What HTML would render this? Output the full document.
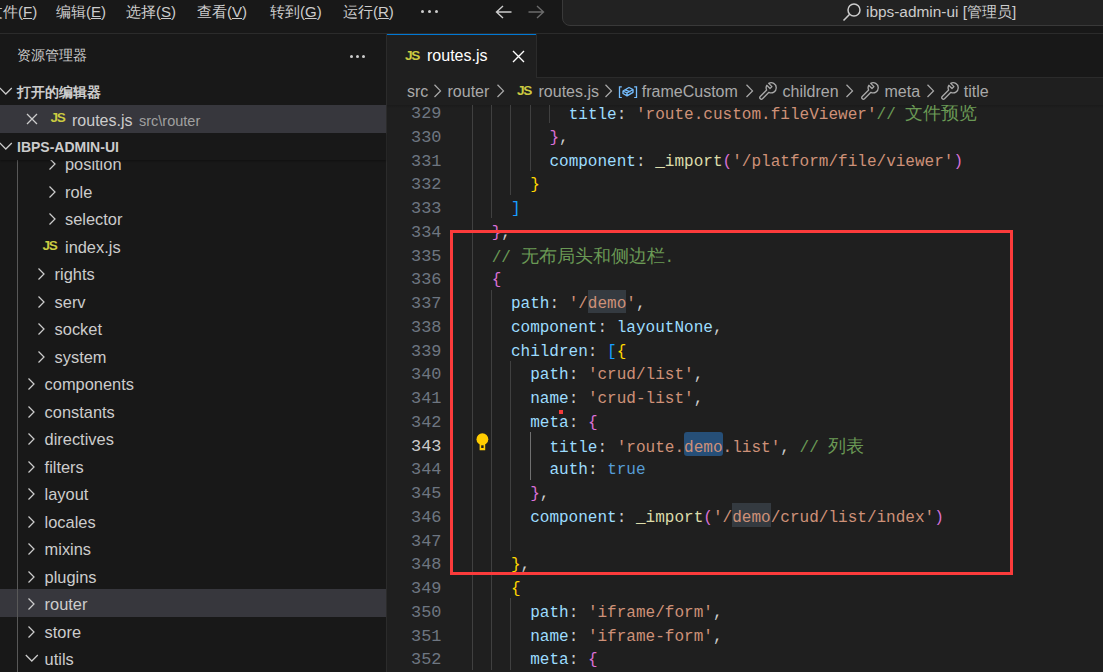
<!DOCTYPE html><html><head><meta charset="utf-8"><style>
*{margin:0;padding:0;box-sizing:border-box}
html,body{width:1103px;height:672px;overflow:hidden;background:#1f1f1f}
body{position:relative;font-family:"Liberation Sans",sans-serif;color:#cccccc}
.a{position:absolute;white-space:nowrap}
.code{font-family:"Liberation Mono",monospace;font-size:16.04px}
.p{color:#9cdcfe}.s{color:#ce9178}.c{color:#6a9955}.f{color:#dcdcaa}.k{color:#569cd6}
.b1{color:#ffd700}.b2{color:#da70d6}.b3{color:#179fff}.w{color:#cccccc}
</style></head><body>
<div class="a" style="left:0;top:0;width:1103px;height:33px;background:#181818"></div>
<div class="a" style="left:0;top:33px;width:1103px;height:1px;background:#2b2b2b"></div>
<div class="a menu" style="left:-12px;top:2px;font-size:15px;line-height:20px;color:#cccccc">文件(<u>F</u>)</div>
<div class="a menu" style="left:56px;top:2px;font-size:15px;line-height:20px;color:#cccccc">编辑(<u>E</u>)</div>
<div class="a menu" style="left:126px;top:2px;font-size:15px;line-height:20px;color:#cccccc">选择(<u>S</u>)</div>
<div class="a menu" style="left:197px;top:2px;font-size:15px;line-height:20px;color:#cccccc">查看(<u>V</u>)</div>
<div class="a menu" style="left:270px;top:2px;font-size:15px;line-height:20px;color:#cccccc">转到(<u>G</u>)</div>
<div class="a menu" style="left:343px;top:2px;font-size:15px;line-height:20px;color:#cccccc">运行(<u>R</u>)</div>
<div class="a" style="left:421px;top:10px;width:3px;height:3px;border-radius:50%;background:#cccccc"></div>
<div class="a" style="left:428px;top:10px;width:3px;height:3px;border-radius:50%;background:#cccccc"></div>
<div class="a" style="left:435px;top:10px;width:3px;height:3px;border-radius:50%;background:#cccccc"></div>
<svg class="a" style="left:494px;top:4px" width="20" height="16" viewBox="0 0 20 16"><path d="M9 2 L2.5 8 L9 14 M2.5 8 H17.5" stroke="#cccccc" stroke-width="1.4" fill="none"/></svg>
<svg class="a" style="left:526px;top:4px" width="20" height="16" viewBox="0 0 20 16"><path d="M11 2 L17.5 8 L11 14 M17.5 8 H2.5" stroke="#6b6b6b" stroke-width="1.4" fill="none"/></svg>
<div class="a" style="left:562px;top:-10px;width:600px;height:36px;background:#222222;border:1px solid #393939;border-radius:8px"></div>
<svg class="a" style="left:842px;top:2px" width="20" height="20" viewBox="0 0 20 20"><circle cx="12" cy="8" r="6" stroke="#cccccc" stroke-width="1.5" fill="none"/><path d="M7.7 12.3 L1.5 18.5" stroke="#cccccc" stroke-width="1.6"/></svg>
<div class="a" style="left:866px;top:1px;font-size:15.4px;line-height:22px;color:#cccccc">ibps-admin-ui [管理员]</div>
<div class="a" style="left:0;top:34px;width:386px;height:638px;background:#181818"></div>
<div class="a" style="left:386px;top:34px;width:1px;height:638px;background:#2b2b2b"></div>
<div class="a" style="left:17px;top:46px;font-size:13.75px;line-height:20px;color:#cccccc">资源管理器</div>
<div class="a" style="left:350px;top:55px;width:3px;height:3px;border-radius:50%;background:#cccccc"></div>
<div class="a" style="left:356px;top:55px;width:3px;height:3px;border-radius:50%;background:#cccccc"></div>
<div class="a" style="left:362px;top:55px;width:3px;height:3px;border-radius:50%;background:#cccccc"></div>
<div class="a" style="left:0;top:589px;width:386px;height:27.5px;background:#37373d"></div>
<div class="a" style="left:17px;top:160px;width:1px;height:512px;background:#585858"></div>
<div class="a" style="left:65px;top:154.2px;font-size:16.4px;line-height:20px;color:#cccccc">position</div>
<svg class="a" style="left:47.5px;top:157.0px" width="9" height="14" viewBox="0 0 9 14"><path d="M1.5 1.5 L7 7 L1.5 12.5" stroke="#cccccc" stroke-width="1.25" fill="none"/></svg>
<div class="a" style="left:65px;top:181.7px;font-size:16.4px;line-height:20px;color:#cccccc">role</div>
<svg class="a" style="left:47.5px;top:184.5px" width="9" height="14" viewBox="0 0 9 14"><path d="M1.5 1.5 L7 7 L1.5 12.5" stroke="#cccccc" stroke-width="1.25" fill="none"/></svg>
<div class="a" style="left:65px;top:209.2px;font-size:16.4px;line-height:20px;color:#cccccc">selector</div>
<svg class="a" style="left:47.5px;top:212.0px" width="9" height="14" viewBox="0 0 9 14"><path d="M1.5 1.5 L7 7 L1.5 12.5" stroke="#cccccc" stroke-width="1.25" fill="none"/></svg>
<div class="a" style="left:65px;top:236.7px;font-size:16.4px;line-height:20px;color:#cccccc">index.js</div>
<div class="a" style="left:42.5px;top:239.8px;font-size:13.6px;line-height:12px;font-weight:bold;color:#cbcb41;letter-spacing:-1.4px">JS</div>
<div class="a" style="left:54.6px;top:264.2px;font-size:16.4px;line-height:20px;color:#cccccc">rights</div>
<svg class="a" style="left:37.1px;top:267.0px" width="9" height="14" viewBox="0 0 9 14"><path d="M1.5 1.5 L7 7 L1.5 12.5" stroke="#cccccc" stroke-width="1.25" fill="none"/></svg>
<div class="a" style="left:54.6px;top:291.7px;font-size:16.4px;line-height:20px;color:#cccccc">serv</div>
<svg class="a" style="left:37.1px;top:294.5px" width="9" height="14" viewBox="0 0 9 14"><path d="M1.5 1.5 L7 7 L1.5 12.5" stroke="#cccccc" stroke-width="1.25" fill="none"/></svg>
<div class="a" style="left:54.6px;top:319.2px;font-size:16.4px;line-height:20px;color:#cccccc">socket</div>
<svg class="a" style="left:37.1px;top:322.0px" width="9" height="14" viewBox="0 0 9 14"><path d="M1.5 1.5 L7 7 L1.5 12.5" stroke="#cccccc" stroke-width="1.25" fill="none"/></svg>
<div class="a" style="left:54.6px;top:346.7px;font-size:16.4px;line-height:20px;color:#cccccc">system</div>
<svg class="a" style="left:37.1px;top:349.5px" width="9" height="14" viewBox="0 0 9 14"><path d="M1.5 1.5 L7 7 L1.5 12.5" stroke="#cccccc" stroke-width="1.25" fill="none"/></svg>
<div class="a" style="left:44.6px;top:374.2px;font-size:16.4px;line-height:20px;color:#cccccc">components</div>
<svg class="a" style="left:27.1px;top:377.0px" width="9" height="14" viewBox="0 0 9 14"><path d="M1.5 1.5 L7 7 L1.5 12.5" stroke="#cccccc" stroke-width="1.25" fill="none"/></svg>
<div class="a" style="left:44.6px;top:401.7px;font-size:16.4px;line-height:20px;color:#cccccc">constants</div>
<svg class="a" style="left:27.1px;top:404.5px" width="9" height="14" viewBox="0 0 9 14"><path d="M1.5 1.5 L7 7 L1.5 12.5" stroke="#cccccc" stroke-width="1.25" fill="none"/></svg>
<div class="a" style="left:44.6px;top:429.2px;font-size:16.4px;line-height:20px;color:#cccccc">directives</div>
<svg class="a" style="left:27.1px;top:432.0px" width="9" height="14" viewBox="0 0 9 14"><path d="M1.5 1.5 L7 7 L1.5 12.5" stroke="#cccccc" stroke-width="1.25" fill="none"/></svg>
<div class="a" style="left:44.6px;top:456.7px;font-size:16.4px;line-height:20px;color:#cccccc">filters</div>
<svg class="a" style="left:27.1px;top:459.5px" width="9" height="14" viewBox="0 0 9 14"><path d="M1.5 1.5 L7 7 L1.5 12.5" stroke="#cccccc" stroke-width="1.25" fill="none"/></svg>
<div class="a" style="left:44.6px;top:484.2px;font-size:16.4px;line-height:20px;color:#cccccc">layout</div>
<svg class="a" style="left:27.1px;top:487.0px" width="9" height="14" viewBox="0 0 9 14"><path d="M1.5 1.5 L7 7 L1.5 12.5" stroke="#cccccc" stroke-width="1.25" fill="none"/></svg>
<div class="a" style="left:44.6px;top:511.7px;font-size:16.4px;line-height:20px;color:#cccccc">locales</div>
<svg class="a" style="left:27.1px;top:514.5px" width="9" height="14" viewBox="0 0 9 14"><path d="M1.5 1.5 L7 7 L1.5 12.5" stroke="#cccccc" stroke-width="1.25" fill="none"/></svg>
<div class="a" style="left:44.6px;top:539.2px;font-size:16.4px;line-height:20px;color:#cccccc">mixins</div>
<svg class="a" style="left:27.1px;top:542.0px" width="9" height="14" viewBox="0 0 9 14"><path d="M1.5 1.5 L7 7 L1.5 12.5" stroke="#cccccc" stroke-width="1.25" fill="none"/></svg>
<div class="a" style="left:44.6px;top:566.7px;font-size:16.4px;line-height:20px;color:#cccccc">plugins</div>
<svg class="a" style="left:27.1px;top:569.5px" width="9" height="14" viewBox="0 0 9 14"><path d="M1.5 1.5 L7 7 L1.5 12.5" stroke="#cccccc" stroke-width="1.25" fill="none"/></svg>
<div class="a" style="left:44.6px;top:594.2px;font-size:16.4px;line-height:20px;color:#cccccc">router</div>
<svg class="a" style="left:27.1px;top:597.0px" width="9" height="14" viewBox="0 0 9 14"><path d="M1.5 1.5 L7 7 L1.5 12.5" stroke="#cccccc" stroke-width="1.25" fill="none"/></svg>
<div class="a" style="left:44.6px;top:621.7px;font-size:16.4px;line-height:20px;color:#cccccc">store</div>
<svg class="a" style="left:27.1px;top:624.5px" width="9" height="14" viewBox="0 0 9 14"><path d="M1.5 1.5 L7 7 L1.5 12.5" stroke="#cccccc" stroke-width="1.25" fill="none"/></svg>
<div class="a" style="left:44.6px;top:649.2px;font-size:16.4px;line-height:20px;color:#cccccc">utils</div>
<svg class="a" style="left:24.6px;top:654.0px" width="14" height="9" viewBox="0 0 14 9"><path d="M0.8 1 L6.8 7 L12.8 1" stroke="#cccccc" stroke-width="1.25" fill="none"/></svg>
<div class="a" style="left:0;top:133px;width:386px;height:27px;background:#181818;box-shadow:0 1px 2px rgba(0,0,0,0.35)"></div>
<svg class="a" style="left:-1px;top:142px" width="14" height="9" viewBox="0 0 14 9"><path d="M0.8 1 L6.8 7 L12.8 1" stroke="#cccccc" stroke-width="1.25" fill="none"/></svg>
<div class="a" style="left:17px;top:136.5px;font-size:14px;line-height:20px;font-weight:bold;color:#cccccc">IBPS-ADMIN-UI</div>
<svg class="a" style="left:-1px;top:87px" width="14" height="9" viewBox="0 0 14 9"><path d="M0.8 1 L6.8 7 L12.8 1" stroke="#cccccc" stroke-width="1.25" fill="none"/></svg>
<div class="a" style="left:17px;top:82.5px;font-size:13.75px;line-height:20px;font-weight:bold;color:#cccccc">打开的编辑器</div>
<div class="a" style="left:0;top:105px;width:386px;height:27.5px;background:#37373d"></div>
<svg class="a" style="left:26px;top:113px" width="12" height="12" viewBox="0 0 12 12"><path d="M1 1 L11 11 M11 1 L1 11" stroke="#cccccc" stroke-width="1.3"/></svg>
<div class="a" style="left:50.5px;top:112.3px;font-size:13.6px;line-height:12px;font-weight:bold;color:#cbcb41;letter-spacing:-1.4px">JS</div>
<div class="a" style="left:72px;top:111.2px;font-size:16px;line-height:20px;color:#cccccc">routes.js</div>
<div class="a" style="left:139px;top:111.2px;font-size:14.5px;line-height:20px;color:#a0a0a0">src\router</div>
<div class="a" style="left:387px;top:34px;width:716px;height:43px;background:#181818"></div>
<div class="a" style="left:387px;top:77px;width:716px;height:1px;background:#2b2b2b"></div>
<div class="a" style="left:387px;top:34px;width:149px;height:44px;background:#1f1f1f;border-top:1.5px solid #0078d4"></div>
<div class="a" style="left:536px;top:34px;width:1px;height:43px;background:#2b2b2b"></div>
<div class="a" style="left:405px;top:49.8px;font-size:13.6px;line-height:12px;font-weight:bold;color:#cbcb41;letter-spacing:-1.4px">JS</div>
<div class="a" style="left:427px;top:45.5px;font-size:16px;line-height:20px;color:#ffffff">routes.js</div>
<svg class="a" style="left:512px;top:50px" width="13" height="13" viewBox="0 0 13 13"><path d="M1 1 L12 12 M12 1 L1 12" stroke="#ffffff" stroke-width="1.4"/></svg>
<div class="a" style="left:387px;top:78px;width:716px;height:27px;background:#1f1f1f"></div>
<div class="a" style="left:407px;top:82.3px;font-size:16px;line-height:20px;color:#a9a9a9">src</div>
<svg class="a" style="left:433px;top:84.1px" width="10" height="14" viewBox="0 0 10 14"><path d="M1.5 0.8 L7.5 6.9 L1.5 13" stroke="#a9a9a9" stroke-width="1.25" fill="none"/></svg>
<div class="a" style="left:447.5px;top:82.3px;font-size:16px;line-height:20px;color:#a9a9a9">router</div>
<svg class="a" style="left:496px;top:84.1px" width="10" height="14" viewBox="0 0 10 14"><path d="M1.5 0.8 L7.5 6.9 L1.5 13" stroke="#a9a9a9" stroke-width="1.25" fill="none"/></svg>
<div class="a" style="left:517px;top:84.8px;font-size:13.6px;line-height:12px;font-weight:bold;color:#cbcb41;letter-spacing:-1.4px">JS</div>
<div class="a" style="left:538.5px;top:82.3px;font-size:16px;line-height:20px;color:#a9a9a9">routes.js</div>
<svg class="a" style="left:604px;top:84.1px" width="10" height="14" viewBox="0 0 10 14"><path d="M1.5 0.8 L7.5 6.9 L1.5 13" stroke="#a9a9a9" stroke-width="1.25" fill="none"/></svg>
<svg class="a" style="left:618px;top:85.5px" width="20" height="12.5" viewBox="0 0 20 12.5"><path d="M3.8 0.8 H1.5 V11.7 H3.8 M16.2 0.8 H18.5 V11.7 H16.2" stroke="#75beff" stroke-width="1.3" fill="none"/><path d="M5 5 L11 1.5 L15 3.5 L9 7 Z M5 5 V7.5 L9 9.8 V7 M9 9.8 L15 6.3 V3.5 M7 3.8 L12.5 5.8" stroke="#75beff" stroke-width="1.35" fill="none" stroke-linejoin="round"/></svg>
<div class="a" style="left:641.8px;top:82.3px;font-size:16px;line-height:20px;color:#a9a9a9">frameCustom</div>
<svg class="a" style="left:745px;top:84.1px" width="10" height="14" viewBox="0 0 10 14"><path d="M1.5 0.8 L7.5 6.9 L1.5 13" stroke="#a9a9a9" stroke-width="1.25" fill="none"/></svg>
<svg class="a" style="left:758px;top:81.8px" width="19" height="19" viewBox="0 0 18 18"><path d="M10.15 1.31 L13.21 4.37 L11.37 6.21 L8.31 3.15 A4.8 4.8 0 0 0 8.22 7.66 L2.11 13.77 A1.5 1.5 0 0 0 4.23 15.89 L10.34 9.78 A4.8 4.8 0 1 0 10.15 1.31 Z" stroke="#a9a9a9" stroke-width="1.25" fill="none" stroke-linejoin="round"/></svg>
<div class="a" style="left:782.6px;top:82.3px;font-size:16px;line-height:20px;color:#a9a9a9">children</div>
<svg class="a" style="left:845px;top:84.1px" width="10" height="14" viewBox="0 0 10 14"><path d="M1.5 0.8 L7.5 6.9 L1.5 13" stroke="#a9a9a9" stroke-width="1.25" fill="none"/></svg>
<svg class="a" style="left:859.5px;top:81.8px" width="19" height="19" viewBox="0 0 18 18"><path d="M10.15 1.31 L13.21 4.37 L11.37 6.21 L8.31 3.15 A4.8 4.8 0 0 0 8.22 7.66 L2.11 13.77 A1.5 1.5 0 0 0 4.23 15.89 L10.34 9.78 A4.8 4.8 0 1 0 10.15 1.31 Z" stroke="#a9a9a9" stroke-width="1.25" fill="none" stroke-linejoin="round"/></svg>
<div class="a" style="left:884.5px;top:82.3px;font-size:16px;line-height:20px;color:#a9a9a9">meta</div>
<svg class="a" style="left:925.5px;top:84.1px" width="10" height="14" viewBox="0 0 10 14"><path d="M1.5 0.8 L7.5 6.9 L1.5 13" stroke="#a9a9a9" stroke-width="1.25" fill="none"/></svg>
<svg class="a" style="left:940px;top:81.8px" width="19" height="19" viewBox="0 0 18 18"><path d="M10.15 1.31 L13.21 4.37 L11.37 6.21 L8.31 3.15 A4.8 4.8 0 0 0 8.22 7.66 L2.11 13.77 A1.5 1.5 0 0 0 4.23 15.89 L10.34 9.78 A4.8 4.8 0 1 0 10.15 1.31 Z" stroke="#a9a9a9" stroke-width="1.25" fill="none" stroke-linejoin="round"/></svg>
<div class="a" style="left:963.8px;top:82.3px;font-size:16px;line-height:20px;color:#a9a9a9">title</div>
<div class="a" style="left:387px;top:104.5px;width:716px;height:3px;background:linear-gradient(#1a1a1a,rgba(31,31,31,0))"></div>
<div class="a" style="left:387px;top:104.5px;width:716px;height:568px;overflow:hidden">
<div class="a" style="left:200.89999999999998px;top:185.0px;width:38.5px;height:23.75px;background:#343a40;border-radius:0px"></div>
<div class="a" style="left:345.275px;top:398.75px;width:38.5px;height:23.75px;background:#343a40;border-radius:0px"></div>
<div class="a" style="left:297.15px;top:327.5px;width:38.5px;height:23.75px;background:#264f78;border-radius:3px"></div>
<div class="a" style="left:85px;top:-5.0px;width:1px;height:23.75px;background:#404040"></div>
<div class="a" style="left:104px;top:-5.0px;width:1px;height:23.75px;background:#404040"></div>
<div class="a" style="left:123px;top:-5.0px;width:1px;height:23.75px;background:#404040"></div>
<div class="a" style="left:143px;top:-5.0px;width:1px;height:23.75px;background:#404040"></div>
<div class="a" style="left:162px;top:-5.0px;width:1px;height:23.75px;background:#404040"></div>
<div class="a" style="left:85px;top:18.75px;width:1px;height:23.75px;background:#404040"></div>
<div class="a" style="left:104px;top:18.75px;width:1px;height:23.75px;background:#404040"></div>
<div class="a" style="left:123px;top:18.75px;width:1px;height:23.75px;background:#404040"></div>
<div class="a" style="left:143px;top:18.75px;width:1px;height:23.75px;background:#404040"></div>
<div class="a" style="left:85px;top:42.5px;width:1px;height:23.75px;background:#404040"></div>
<div class="a" style="left:104px;top:42.5px;width:1px;height:23.75px;background:#404040"></div>
<div class="a" style="left:123px;top:42.5px;width:1px;height:23.75px;background:#404040"></div>
<div class="a" style="left:143px;top:42.5px;width:1px;height:23.75px;background:#404040"></div>
<div class="a" style="left:85px;top:66.25px;width:1px;height:23.75px;background:#404040"></div>
<div class="a" style="left:104px;top:66.25px;width:1px;height:23.75px;background:#404040"></div>
<div class="a" style="left:123px;top:66.25px;width:1px;height:23.75px;background:#404040"></div>
<div class="a" style="left:85px;top:90.0px;width:1px;height:23.75px;background:#404040"></div>
<div class="a" style="left:104px;top:90.0px;width:1px;height:23.75px;background:#404040"></div>
<div class="a" style="left:85px;top:113.75px;width:1px;height:23.75px;background:#404040"></div>
<div class="a" style="left:85px;top:137.5px;width:1px;height:23.75px;background:#404040"></div>
<div class="a" style="left:85px;top:161.25px;width:1px;height:23.75px;background:#404040"></div>
<div class="a" style="left:85px;top:185.0px;width:1px;height:23.75px;background:#404040"></div>
<div class="a" style="left:104px;top:185.0px;width:1px;height:23.75px;background:#404040"></div>
<div class="a" style="left:85px;top:208.75px;width:1px;height:23.75px;background:#404040"></div>
<div class="a" style="left:104px;top:208.75px;width:1px;height:23.75px;background:#404040"></div>
<div class="a" style="left:85px;top:232.5px;width:1px;height:23.75px;background:#404040"></div>
<div class="a" style="left:104px;top:232.5px;width:1px;height:23.75px;background:#404040"></div>
<div class="a" style="left:85px;top:256.25px;width:1px;height:23.75px;background:#404040"></div>
<div class="a" style="left:104px;top:256.25px;width:1px;height:23.75px;background:#404040"></div>
<div class="a" style="left:123px;top:256.25px;width:1px;height:23.75px;background:#404040"></div>
<div class="a" style="left:85px;top:280.0px;width:1px;height:23.75px;background:#404040"></div>
<div class="a" style="left:104px;top:280.0px;width:1px;height:23.75px;background:#404040"></div>
<div class="a" style="left:123px;top:280.0px;width:1px;height:23.75px;background:#404040"></div>
<div class="a" style="left:85px;top:303.75px;width:1px;height:23.75px;background:#404040"></div>
<div class="a" style="left:104px;top:303.75px;width:1px;height:23.75px;background:#404040"></div>
<div class="a" style="left:123px;top:303.75px;width:1px;height:23.75px;background:#404040"></div>
<div class="a" style="left:85px;top:327.5px;width:1px;height:23.75px;background:#404040"></div>
<div class="a" style="left:104px;top:327.5px;width:1px;height:23.75px;background:#404040"></div>
<div class="a" style="left:123px;top:327.5px;width:1px;height:23.75px;background:#404040"></div>
<div class="a" style="left:143px;top:327.5px;width:1px;height:23.75px;background:#707070"></div>
<div class="a" style="left:85px;top:351.25px;width:1px;height:23.75px;background:#404040"></div>
<div class="a" style="left:104px;top:351.25px;width:1px;height:23.75px;background:#404040"></div>
<div class="a" style="left:123px;top:351.25px;width:1px;height:23.75px;background:#404040"></div>
<div class="a" style="left:143px;top:351.25px;width:1px;height:23.75px;background:#707070"></div>
<div class="a" style="left:85px;top:375.0px;width:1px;height:23.75px;background:#404040"></div>
<div class="a" style="left:104px;top:375.0px;width:1px;height:23.75px;background:#404040"></div>
<div class="a" style="left:123px;top:375.0px;width:1px;height:23.75px;background:#404040"></div>
<div class="a" style="left:85px;top:398.75px;width:1px;height:23.75px;background:#404040"></div>
<div class="a" style="left:104px;top:398.75px;width:1px;height:23.75px;background:#404040"></div>
<div class="a" style="left:123px;top:398.75px;width:1px;height:23.75px;background:#404040"></div>
<div class="a" style="left:85px;top:422.5px;width:1px;height:23.75px;background:#404040"></div>
<div class="a" style="left:104px;top:422.5px;width:1px;height:23.75px;background:#404040"></div>
<div class="a" style="left:123px;top:422.5px;width:1px;height:23.75px;background:#404040"></div>
<div class="a" style="left:85px;top:446.25px;width:1px;height:23.75px;background:#404040"></div>
<div class="a" style="left:104px;top:446.25px;width:1px;height:23.75px;background:#404040"></div>
<div class="a" style="left:85px;top:470.0px;width:1px;height:23.75px;background:#404040"></div>
<div class="a" style="left:104px;top:470.0px;width:1px;height:23.75px;background:#404040"></div>
<div class="a" style="left:85px;top:493.75px;width:1px;height:23.75px;background:#404040"></div>
<div class="a" style="left:104px;top:493.75px;width:1px;height:23.75px;background:#404040"></div>
<div class="a" style="left:123px;top:493.75px;width:1px;height:23.75px;background:#404040"></div>
<div class="a" style="left:85px;top:517.5px;width:1px;height:23.75px;background:#404040"></div>
<div class="a" style="left:104px;top:517.5px;width:1px;height:23.75px;background:#404040"></div>
<div class="a" style="left:123px;top:517.5px;width:1px;height:23.75px;background:#404040"></div>
<div class="a" style="left:85px;top:541.25px;width:1px;height:23.75px;background:#404040"></div>
<div class="a" style="left:104px;top:541.25px;width:1px;height:23.75px;background:#404040"></div>
<div class="a" style="left:123px;top:541.25px;width:1px;height:23.75px;background:#404040"></div>
<div class="a code" style="left:0;top:-2.3px;width:54.5px;text-align:right;line-height:23.75px;font-size:16.9px;color:#6e7681">329</div>
<div class="a code" style="left:181.64999999999998px;top:-1.5px;line-height:23.75px"><span class="p">title</span><span class="w">: </span><span class="s">&#x27;route.custom.fileViewer&#x27;</span><span class="c">// <span style="font-size:17.8px">文件预览</span></span></div>
<div class="a code" style="left:0;top:21.45px;width:54.5px;text-align:right;line-height:23.75px;font-size:16.9px;color:#6e7681">330</div>
<div class="a code" style="left:162.39999999999998px;top:22.25px;line-height:23.75px"><span class="b2">}</span><span class="w">,</span></div>
<div class="a code" style="left:0;top:45.2px;width:54.5px;text-align:right;line-height:23.75px;font-size:16.9px;color:#6e7681">331</div>
<div class="a code" style="left:162.39999999999998px;top:46.0px;line-height:23.75px"><span class="p">component</span><span class="w">: </span><span class="f">_import</span><span class="b2">(</span><span class="s">&#x27;/platform/file/viewer&#x27;</span><span class="b2">)</span></div>
<div class="a code" style="left:0;top:68.95px;width:54.5px;text-align:right;line-height:23.75px;font-size:16.9px;color:#6e7681">332</div>
<div class="a code" style="left:143.14999999999998px;top:69.75px;line-height:23.75px"><span class="b1">}</span></div>
<div class="a code" style="left:0;top:92.7px;width:54.5px;text-align:right;line-height:23.75px;font-size:16.9px;color:#6e7681">333</div>
<div class="a code" style="left:123.89999999999998px;top:93.5px;line-height:23.75px"><span class="b3">]</span></div>
<div class="a code" style="left:0;top:116.45px;width:54.5px;text-align:right;line-height:23.75px;font-size:16.9px;color:#6e7681">334</div>
<div class="a code" style="left:104.64999999999998px;top:117.25px;line-height:23.75px"><span class="b2">}</span><span class="w">,</span></div>
<div class="a code" style="left:0;top:140.2px;width:54.5px;text-align:right;line-height:23.75px;font-size:16.9px;color:#6e7681">335</div>
<div class="a code" style="left:104.64999999999998px;top:141.0px;line-height:23.75px"><span class="c">// <span style="font-size:17.8px">无布局头和侧边栏</span>.</span></div>
<div class="a code" style="left:0;top:163.95px;width:54.5px;text-align:right;line-height:23.75px;font-size:16.9px;color:#6e7681">336</div>
<div class="a code" style="left:104.64999999999998px;top:164.75px;line-height:23.75px"><span class="b2">{</span></div>
<div class="a code" style="left:0;top:187.7px;width:54.5px;text-align:right;line-height:23.75px;font-size:16.9px;color:#6e7681">337</div>
<div class="a code" style="left:123.89999999999998px;top:188.5px;line-height:23.75px"><span class="p">path</span><span class="w">: </span><span class="s">&#x27;/demo&#x27;</span><span class="w">,</span></div>
<div class="a code" style="left:0;top:211.45px;width:54.5px;text-align:right;line-height:23.75px;font-size:16.9px;color:#6e7681">338</div>
<div class="a code" style="left:123.89999999999998px;top:212.25px;line-height:23.75px"><span class="p">component</span><span class="w">: </span><span class="p">layoutNone</span><span class="w">,</span></div>
<div class="a code" style="left:0;top:235.2px;width:54.5px;text-align:right;line-height:23.75px;font-size:16.9px;color:#6e7681">339</div>
<div class="a code" style="left:123.89999999999998px;top:236.0px;line-height:23.75px"><span class="p">children</span><span class="w">: </span><span class="b3">[</span><span class="b1">{</span></div>
<div class="a code" style="left:0;top:258.95px;width:54.5px;text-align:right;line-height:23.75px;font-size:16.9px;color:#6e7681">340</div>
<div class="a code" style="left:143.14999999999998px;top:259.75px;line-height:23.75px"><span class="p">path</span><span class="w">: </span><span class="s">&#x27;crud/list&#x27;</span><span class="w">,</span></div>
<div class="a code" style="left:0;top:282.7px;width:54.5px;text-align:right;line-height:23.75px;font-size:16.9px;color:#6e7681">341</div>
<div class="a code" style="left:143.14999999999998px;top:283.5px;line-height:23.75px"><span class="p">name</span><span class="w">: </span><span class="s">&#x27;crud-list&#x27;</span><span class="w">,</span></div>
<div class="a code" style="left:0;top:306.45px;width:54.5px;text-align:right;line-height:23.75px;font-size:16.9px;color:#6e7681">342</div>
<div class="a code" style="left:143.14999999999998px;top:307.25px;line-height:23.75px"><span class="p">meta</span><span class="w">: </span><span class="b2">{</span></div>
<div class="a code" style="left:0;top:330.2px;width:54.5px;text-align:right;line-height:23.75px;font-size:16.9px;color:#cccccc">343</div>
<div class="a code" style="left:162.39999999999998px;top:331.0px;line-height:23.75px"><span class="p">title</span><span class="w">: </span><span class="s">&#x27;route.demo.list&#x27;</span><span class="w">, </span><span class="c">// <span style="font-size:17.8px">列表</span></span></div>
<div class="a code" style="left:0;top:353.95px;width:54.5px;text-align:right;line-height:23.75px;font-size:16.9px;color:#6e7681">344</div>
<div class="a code" style="left:162.39999999999998px;top:354.75px;line-height:23.75px"><span class="p">auth</span><span class="w">: </span><span class="k">true</span></div>
<div class="a code" style="left:0;top:377.7px;width:54.5px;text-align:right;line-height:23.75px;font-size:16.9px;color:#6e7681">345</div>
<div class="a code" style="left:143.14999999999998px;top:378.5px;line-height:23.75px"><span class="b2">}</span><span class="w">,</span></div>
<div class="a code" style="left:0;top:401.45px;width:54.5px;text-align:right;line-height:23.75px;font-size:16.9px;color:#6e7681">346</div>
<div class="a code" style="left:143.14999999999998px;top:402.25px;line-height:23.75px"><span class="p">component</span><span class="w">: </span><span class="f">_import</span><span class="b2">(</span><span class="s">&#x27;/demo/crud/list/index&#x27;</span><span class="b2">)</span></div>
<div class="a code" style="left:0;top:425.2px;width:54.5px;text-align:right;line-height:23.75px;font-size:16.9px;color:#6e7681">347</div>
<div class="a code" style="left:85.39999999999998px;top:426.0px;line-height:23.75px"></div>
<div class="a code" style="left:0;top:448.95px;width:54.5px;text-align:right;line-height:23.75px;font-size:16.9px;color:#6e7681">348</div>
<div class="a code" style="left:123.89999999999998px;top:449.75px;line-height:23.75px"><span class="b1">}</span><span class="w">,</span></div>
<div class="a code" style="left:0;top:472.7px;width:54.5px;text-align:right;line-height:23.75px;font-size:16.9px;color:#6e7681">349</div>
<div class="a code" style="left:123.89999999999998px;top:473.5px;line-height:23.75px"><span class="b1">{</span></div>
<div class="a code" style="left:0;top:496.45px;width:54.5px;text-align:right;line-height:23.75px;font-size:16.9px;color:#6e7681">350</div>
<div class="a code" style="left:143.14999999999998px;top:497.25px;line-height:23.75px"><span class="p">path</span><span class="w">: </span><span class="s">&#x27;iframe/form&#x27;</span><span class="w">,</span></div>
<div class="a code" style="left:0;top:520.2px;width:54.5px;text-align:right;line-height:23.75px;font-size:16.9px;color:#6e7681">351</div>
<div class="a code" style="left:143.14999999999998px;top:521.0px;line-height:23.75px"><span class="p">name</span><span class="w">: </span><span class="s">&#x27;iframe-form&#x27;</span><span class="w">,</span></div>
<div class="a code" style="left:0;top:543.95px;width:54.5px;text-align:right;line-height:23.75px;font-size:16.9px;color:#6e7681">352</div>
<div class="a code" style="left:143.14999999999998px;top:544.75px;line-height:23.75px"><span class="p">meta</span><span class="w">: </span><span class="b2">{</span></div>
<svg class="a" style="left:89.19999999999999px;top:328.8px" width="13" height="18" viewBox="0 0 13 18"><circle cx="6.4" cy="6.2" r="5.9" fill="#ffcc00"/><path d="M3.2 9.5 L9.6 9.5 L9.2 11.5 V17.2 H3.6 V11.5 Z" fill="#ffcc00"/><rect x="5.2" y="12.3" width="2.4" height="2.7" fill="#1f1f1f"/></svg>
<div class="a" style="left:172px;top:305.5px;width:4px;height:4px;background:#f33b3b"></div>
</div>
<div class="a" style="left:450px;top:230px;width:563px;height:345px;border:3px solid #fb3b3b"></div>
</body></html>
